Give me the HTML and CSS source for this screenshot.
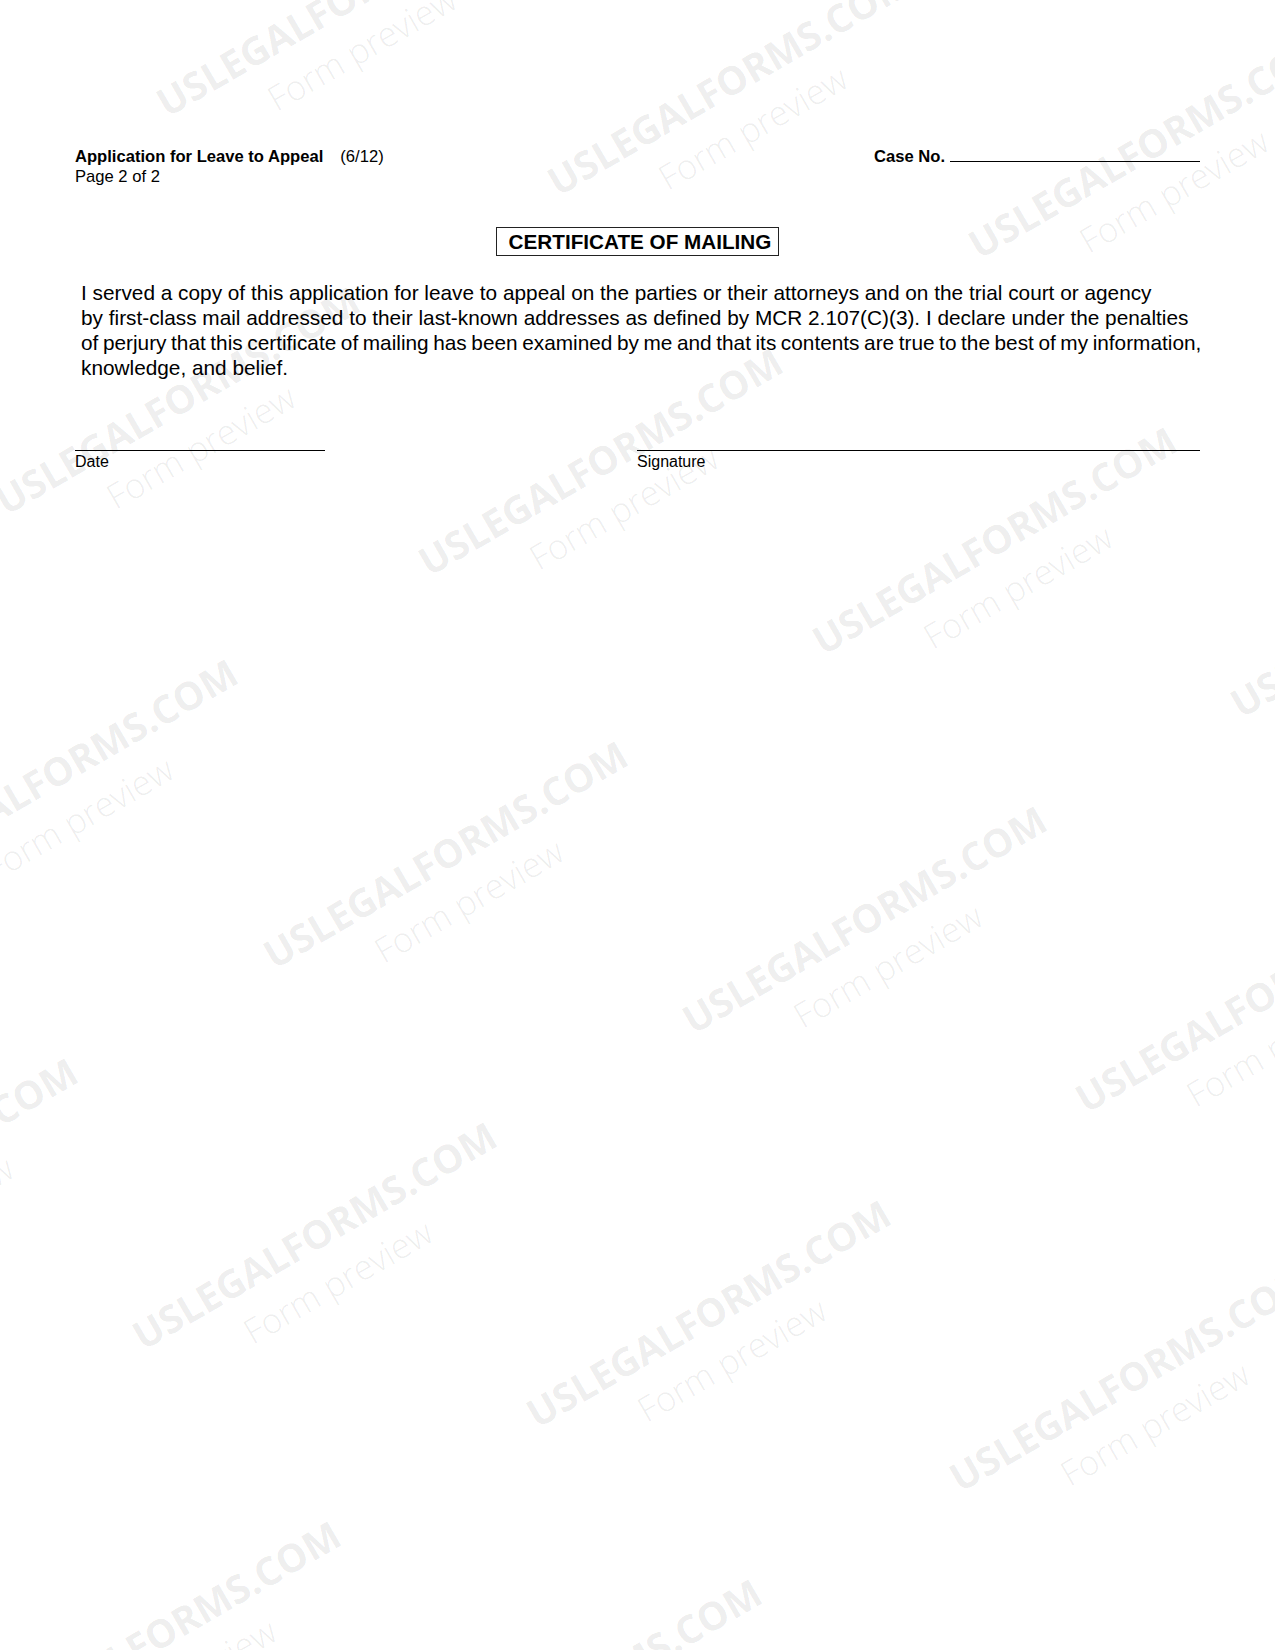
FILE: index.html
```html
<!DOCTYPE html>
<html lang="en">
<head>
<meta charset="utf-8">
<title>Application for Leave to Appeal - Page 2</title>
<link rel="stylesheet" href="styles.css">
</head>
<body>
<div class="page">
  <header class="head">
    <div class="head-left">
      <div class="head-line"><b class="title">Application for Leave to Appeal</b><span class="rev">(6/12)</span></div>
      <div class="head-line">Page 2 of 2</div>
    </div>
    <div class="case"><b>Case No.</b><span class="case-line"></span></div>
  </header>

  <div class="cert-wrap"><h1 class="cert">CERTIFICATE OF MAILING</h1></div>

  <p class="statement">
    <span class="ln">I served a copy of this application for leave to appeal on the parties or their attorneys and on the trial court or agency</span>
    <span class="ln">by first-class mail addressed to their last-known addresses as defined by MCR 2.107(C)(3). I declare under the penalties</span>
    <span class="ln ln-tight">of perjury that this certificate of mailing has been examined by me and that its contents are true to the best of my information,</span>
    <span class="ln">knowledge, and belief.</span>
  </p>

  <div class="sigs">
    <div class="sig sig-date"><div class="sig-rule"></div><span class="sig-label">Date</span></div>
    <div class="sig sig-name"><div class="sig-rule"></div><span class="sig-label">Signature</span></div>
  </div>
</div>

<div class="wm-layer" aria-hidden="true">
  <div class="wm wm-a"><span class="wm-main">USLEGALFORMS.COM</span><span class="wm-sub">Form preview</span></div>
  <div class="wm wm-b"><span class="wm-main">USLEGALFORMS.COM</span><span class="wm-sub">Form preview</span></div>
  <div class="wm wm-c"><span class="wm-main">USLEGALFORMS.COM</span><span class="wm-sub">Form preview</span></div>
  <div class="wm wm-d"><span class="wm-main">USLEGALFORMS.COM</span><span class="wm-sub">Form preview</span></div>
  <div class="wm wm-e"><span class="wm-main">USLEGALFORMS.COM</span><span class="wm-sub">Form preview</span></div>
  <div class="wm wm-f"><span class="wm-main">USLEGALFORMS.COM</span><span class="wm-sub">Form preview</span></div>
  <div class="wm wm-q"><span class="wm-main">USLEGALFORMS.COM</span><span class="wm-sub">Form preview</span></div>
  <div class="wm wm-g"><span class="wm-main">USLEGALFORMS.COM</span><span class="wm-sub">Form preview</span></div>
  <div class="wm wm-h"><span class="wm-main">USLEGALFORMS.COM</span><span class="wm-sub">Form preview</span></div>
  <div class="wm wm-i"><span class="wm-main">USLEGALFORMS.COM</span><span class="wm-sub">Form preview</span></div>
  <div class="wm wm-j"><span class="wm-main">USLEGALFORMS.COM</span><span class="wm-sub">Form preview</span></div>
  <div class="wm wm-k"><span class="wm-main">USLEGALFORMS.COM</span><span class="wm-sub">Form preview</span></div>
  <div class="wm wm-l"><span class="wm-main">USLEGALFORMS.COM</span><span class="wm-sub">Form preview</span></div>
  <div class="wm wm-m"><span class="wm-main">USLEGALFORMS.COM</span><span class="wm-sub">Form preview</span></div>
  <div class="wm wm-n"><span class="wm-main">USLEGALFORMS.COM</span><span class="wm-sub">Form preview</span></div>
  <div class="wm wm-o"><span class="wm-main">USLEGALFORMS.COM</span><span class="wm-sub">Form preview</span></div>
  <div class="wm wm-p"><span class="wm-main">USLEGALFORMS.COM</span><span class="wm-sub">Form preview</span></div>
</div>
</body>
</html>
```

FILE: styles.css
```css
html, body {
  margin: 0;
  padding: 0;
  background: #ffffff;
}

body {
  position: relative;
  width: 1275px;
  min-height: 1650px;
  overflow: hidden;
  font-family: "Liberation Sans", Arial, Helvetica, sans-serif;
  color: #000;
}

.page {
  box-sizing: border-box;
  width: 1275px;
  padding: 147px 75px 0 75px;
}

/* ---- header ---- */
.head {
  display: flex;
  justify-content: space-between;
  align-items: flex-start;
  font-size: 16.6px;
  line-height: 20px;
}

.title {
  font-weight: bold;
}

.rev {
  margin-left: 17px;
}

.case {
  display: flex;
  align-items: baseline;
  font-weight: bold;
}

.case-line {
  display: inline-block;
  width: 250px;
  height: 12px;
  margin-left: 5px;
  border-bottom: 1.5px solid #000;
}

/* ---- certificate title ---- */
.cert-wrap {
  display: flex;
  justify-content: center;
  margin-top: 40px;
}

.cert {
  margin: 0;
  padding: 1px 7px 1px 12px;
  border: 1.5px solid #222;
  font-size: 20.7px;
  line-height: 25px;
  font-weight: bold;
}

/* ---- statement ---- */
.statement {
  margin: 24px 0 0 0;
  padding-left: 6px;
  font-size: 20.8px;
  line-height: 25px;
}

.ln {
  display: block;
  white-space: nowrap;
}

.ln-tight {
  word-spacing: -1.2px;
}

/* ---- signature lines ---- */
.sigs {
  display: flex;
  justify-content: space-between;
  margin-top: 70px;
}

.sig-date {
  width: 250px;
}

.sig-name {
  width: 563px;
}

.sig-rule {
  height: 0;
  border-top: 1.5px solid #000;
}

.sig-label {
  display: block;
  padding-top: 2px;
  font-size: 16px;
  line-height: 18px;
}

/* ---- watermark overlay ---- */
.wm-layer {
  position: absolute;
  left: 0;
  top: 0;
  width: 1275px;
  height: 1650px;
  overflow: hidden;
  pointer-events: none;
}

.wm {
  position: absolute;
  width: 0;
  height: 0;
  transform: rotate(-30deg);
  transform-origin: 0 0;
  font-family: "Open Sans", "DejaVu Sans", sans-serif;
  color: rgba(0, 0, 0, 0.08);
  white-space: nowrap;
}

.wm-main {
  position: absolute;
  left: 0;
  bottom: -4px;
  font-size: 39px;
  line-height: 39px;
  font-weight: 700;
}

.wm-sub {
  position: absolute;
  left: 98px;
  bottom: -54px;
  font-size: 34.5px;
  line-height: 34px;
  font-weight: 300;
}

.wm-a { left: 167px; top: 118px; }
.wm-b { left: 558px; top: 197px; }
.wm-c { left: 979px; top: 260px; }
.wm-d { left: 6px; top: 516px; }
.wm-e { left: 429px; top: 577px; }
.wm-f { left: 823px; top: 656px; }
.wm-q { left: 1241px; top: 719px; }
.wm-g { left: -116px; top: 888px; }
.wm-h { left: 274px; top: 970px; }
.wm-i { left: 693px; top: 1035px; }
.wm-j { left: 1086px; top: 1114px; }
.wm-k { left: -276px; top: 1287px; }
.wm-l { left: 143px; top: 1351px; }
.wm-m { left: 537px; top: 1429px; }
.wm-n { left: 960px; top: 1493px; }
.wm-o { left: -13px; top: 1750px; }
.wm-p { left: 408px; top: 1808px; }
```
